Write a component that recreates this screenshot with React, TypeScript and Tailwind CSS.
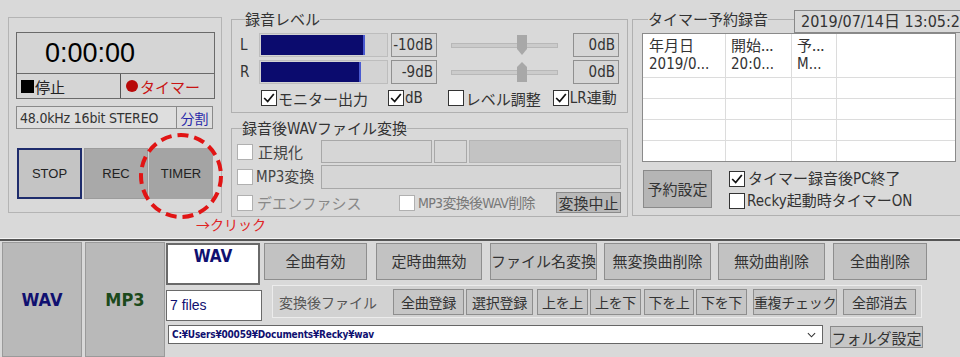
import React from 'react'

const JP = "font-['Noto_Sans_CJK_JP',sans-serif]"
const NARROW = "font-['Liberation_Sans_Narrow','DejaVu_Sans_Condensed','Noto_Sans_CJK_JP',sans-serif]"

function Check({ on, dim }: { on?: boolean; dim?: boolean }) {
  return (
    <span
      className={`flex h-[16px] w-[16px] shrink-0 items-center justify-center bg-white border ${
        dim ? 'border-[#b0b0b0]' : 'border-[#333333]'
      }`}
    >
      {on && (
        <svg viewBox="0 0 16 16" className="h-[14px] w-[14px]">
          <path d="M2.5 8 L6.5 12 L13.5 3.5" fill="none" stroke="#111" strokeWidth="2" />
        </svg>
      )}
    </span>
  )
}

function Meter({ fill }: { fill: number }) {
  return (
    <div className="h-[24px] w-[129px] shrink-0 border border-[#bdbdbd] bg-[#d3d3d3] py-[1px] pl-[1px]">
      <div className="h-full border-r-2 border-[#4a5ad0] bg-[#0b0b6e]" style={{ width: fill }} />
    </div>
  )
}

function Slider({ up }: { up?: boolean }) {
  return (
    <div className="relative flex h-[24px] w-[107px] items-center">
      <div className="h-[5px] w-full border border-[#b8b8b8] bg-[#cbcbcb]" />
      <svg viewBox="0 0 10 20" className="absolute left-[66px] top-[2px] h-[20px] w-[10px]">
        {up ? (
          <path d="M5 0 L10 5 V20 H0 V5 Z" fill="#a8a8a8" />
        ) : (
          <path d="M0 0 H10 V14 L5 20 L0 14 Z" fill="#a8a8a8" />
        )}
      </svg>
    </div>
  )
}

function DbBox({ text }: { text: string }) {
  return (
    <div className={`flex h-[24px] w-[46px] items-center justify-end border border-[#909090] bg-[#d6d6d6] pr-[3px] text-[15px] leading-none text-[#333] ${NARROW}`}>
      {text}
    </div>
  )
}

function TopBtn({ label, w, ml }: { label: string; w: string; ml: string }) {
  return (
    <div
      className={`flex h-[37px] shrink-0 items-center justify-center whitespace-nowrap border border-[#8e8e8e] bg-[#c2c2c2] text-[15px] text-[#333] ${w} ${ml}`}
    >
      {label}
    </div>
  )
}

function SmallBtn({ label, w, ml }: { label: string; w: string; ml: string }) {
  return (
    <div
      className={`flex h-[26px] shrink-0 items-center justify-center whitespace-nowrap border border-[#8e8e8e] bg-[#c6c6c6] text-[14px] leading-none tracking-[-0.3px] text-[#333] ${w} ${ml}`}
    >
      {label}
    </div>
  )
}

export default function App() {
  return (
    <div className={`relative h-[357px] w-[960px] overflow-hidden bg-[#d9d9d9] text-[#222] ${JP}`}>
      {/* top area */}
      <div className="flex h-[239px] border-b border-[#f4f4f4]">
        {/* left: counter + transport */}
        <div className="ml-[8px] mt-[17px] h-[196px] w-[214px] shrink-0 border border-[#b4b4b4] px-[7px] pt-[14px]">
          <div className="flex h-[42px] w-[199px] items-center border border-[#6a6a6a] bg-[#d5d5d5] pl-[28px] font-['Liberation_Sans',sans-serif] text-[27px] font-medium leading-none text-black">
            0:00:00
          </div>
          <div className="flex h-[25px] w-[199px] border-x border-b border-[#6a6a6a] bg-[#d5d5d5] text-[15px] leading-none">
            <div className="flex w-[104px] items-center border-r border-[#555] pl-[4px]">
              <span className="mr-[1px] inline-block h-[13px] w-[13px] bg-black" />
              停止
            </div>
            <div className="flex items-center pl-[5px] text-[#c81414]">
              <span className="mr-[2px] inline-block h-[12px] w-[12px] rounded-full bg-[#b80a0a]" />
              タイマー
            </div>
          </div>
          <div className="mt-[7px] flex h-[23px]">
            <div className={`flex w-[161px] items-center whitespace-nowrap border border-[#8a8a8a] bg-[#dedede] pl-[3px] text-[14px] leading-none tracking-[-0.2px] text-[#333] ${NARROW}`}>
              48.0kHz 16bit STEREO
            </div>
            <div className="flex w-[36px] items-center justify-center border border-l-0 border-[#8a8a8a] bg-[#dedede] text-[14px] leading-none text-[#2828a8]">
              分割
            </div>
          </div>
          <div className="mt-[19px] flex h-[51px] font-['Liberation_Sans',sans-serif] text-[13px] text-[#222]">
            <div className="ml-[1px] flex w-[65px] items-center justify-center border-2 border-[#1e2c6c] bg-[#c4c4c4]">STOP</div>
            <div className="ml-[2px] flex w-[64px] items-center justify-center border border-[#9c9c9c] bg-[#a9a9a9]">REC</div>
            <div className="flex w-[65px] items-center justify-center border-l border-[#d2d2d2] bg-[#a4a4a4]">TIMER</div>
          </div>
        </div>

        {/* middle column */}
        <div className="ml-[9px] flex w-[397px] shrink-0 flex-col">
          <fieldset className="mt-[10px] h-[103px] border border-[#b0b0b0] pl-[8px]">
            <legend className="ml-[5px] text-[15px] leading-[18px] text-[#333]">録音レベル</legend>
            <div className="mt-[5px] flex items-center">
              <span className={`w-[19px] text-[15px] leading-none text-[#333] ${NARROW}`}>L</span>
              <Meter fill={104} />
              <div className="ml-[3px]"><DbBox text="-10dB" /></div>
              <div className="ml-[14px]"><Slider /></div>
              <div className="ml-[15px]"><DbBox text="0dB" /></div>
            </div>
            <div className="mt-[3px] flex items-center">
              <span className={`w-[19px] text-[15px] leading-none text-[#333] ${NARROW}`}>R</span>
              <Meter fill={100} />
              <div className="ml-[3px]"><DbBox text="-9dB" /></div>
              <div className="ml-[14px]"><Slider up /></div>
              <div className="ml-[15px]"><DbBox text="0dB" /></div>
            </div>
            <div className="mt-[4px] flex h-[20px] items-center whitespace-nowrap text-[15px] leading-none text-[#333]">
              <span className="ml-[21px]"><Check on /></span>
              <span className="ml-[1px]">モニター出力</span>
              <span className="ml-[20px]"><Check on /></span>
              <span className={`ml-[1px] ${NARROW}`}>dB</span>
              <span className="ml-[25px]"><Check /></span>
              <span className="ml-[2px]">レベル調整</span>
              <span className="ml-[12px]"><Check on /></span>
              <span className={`ml-[1px] ${NARROW}`}>LR連動</span>
            </div>
          </fieldset>

          <fieldset className="mt-[6px] h-[98px] border border-[#b0b0b0] pl-[5px]">
            <legend className="ml-[5px] text-[15px] leading-[18px] text-[#333]">
              録音後<span className={NARROW}>WAV</span>ファイル変換
            </legend>
            <div className="mt-[2px] flex h-[23px] items-center text-[15px] leading-none">
              <Check dim />
              <span className="ml-[5px] w-[63px] text-[#444]">正規化</span>
              <div className="h-[23px] w-[111px] border border-[#a8a8a8] bg-[#d6d6d6]" />
              <div className="ml-[2px] h-[23px] w-[33px] border border-[#a8a8a8] bg-[#d6d6d6]" />
              <div className="ml-[2px] h-[23px] w-[152px] border border-[#b4b4b4] bg-[#c3c3c3]" />
            </div>
            <div className="mt-[2px] flex h-[24px] items-center text-[15px] leading-none">
              <Check dim />
              <span className={`ml-[3px] w-[65px] text-[#444] ${NARROW}`}>MP3変換</span>
              <div className="h-[24px] w-[300px] border border-[#a8a8a8] bg-[#d6d6d6]" />
            </div>
            <div className="mt-[3px] flex h-[21px] items-center whitespace-nowrap text-[15px] leading-none">
              <Check dim />
              <span className="ml-[4px] w-[142px] text-[#888]">デエンファシス</span>
              <Check dim />
              <span className={`ml-[3px] w-[138px] text-[14px] tracking-[-0.7px] text-[#777] ${NARROW}`}>MP3変換後WAV削除</span>
              <div className="flex h-[21px] w-[65px] items-center justify-center border border-[#8a8a8a] bg-[#b9b9b9] text-[#333]">
                変換中止
              </div>
            </div>
          </fieldset>
        </div>

        {/* right: timer reservation */}
        <fieldset className="relative ml-[4px] mt-[10px] h-[206px] w-[335px] shrink-0 border border-[#b0b0b0] pl-[9px]">
          <legend className="ml-[6px] text-[15px] leading-[18px] text-[#333]">タイマー予約録音</legend>
          <div className={`absolute left-[161px] top-[-18px] flex h-[23px] w-[172px] items-center whitespace-nowrap border border-[#888] bg-[#d9d9d9] pl-[6px] text-[16px] leading-none text-[#333] ${NARROW}`}>
            2019/07/14日 13:05:22
          </div>
          <div className="mt-[5px] h-[129px] w-[314px] border border-[#8a8a8a] bg-white text-[15px] leading-[16px] text-[#333]">
            <div className="flex h-[44px] border-b border-[#dcdcdc]">
              <div className="w-[83px] border-r border-[#dcdcdc] pl-[6px] pt-[3px]">
                <div>年月日</div>
                <div className={`mt-[3px] ${NARROW}`}>2019/0...</div>
              </div>
              <div className="w-[66px] border-r border-[#dcdcdc] pl-[5px] pt-[3px]">
                <div>開始...</div>
                <div className={`mt-[3px] ${NARROW}`}>20:0...</div>
              </div>
              <div className="w-[45px] border-r border-[#dcdcdc] pl-[5px] pt-[3px]">
                <div>予...</div>
                <div className={`mt-[3px] ${NARROW}`}>M...</div>
              </div>
            </div>
            {[0, 1, 2].map((i) => (
              <div key={i} className="flex h-[21px] border-b border-[#dcdcdc]">
                <div className="w-[83px] border-r border-[#dcdcdc]" />
                <div className="w-[66px] border-r border-[#dcdcdc]" />
                <div className="w-[45px] border-r border-[#dcdcdc]" />
              </div>
            ))}
            <div className="flex h-[20px]">
              <div className="w-[83px] border-r border-[#dcdcdc]" />
              <div className="w-[66px] border-r border-[#dcdcdc]" />
              <div className="w-[45px] border-r border-[#dcdcdc]" />
            </div>
          </div>
          <div className="mt-[6px] flex">
            <div className="ml-[1px] mt-[2px] flex h-[38px] w-[69px] items-center justify-center border border-[#8a8a8a] bg-[#b5b5b5] text-[15px] text-[#333]">
              予約設定
            </div>
            <div className="ml-[17px] flex flex-col whitespace-nowrap text-[15px] leading-none text-[#333]">
              <div className="flex h-[21px] items-center">
                <Check on />
                <span className="ml-[3px]">
                  タイマー録音後<span className={NARROW}>PC</span>終了
                </span>
              </div>
              <div className="mt-[1px] flex h-[21px] items-center">
                <Check />
                <span className="ml-[2px]">
                  <span className={NARROW}>Recky</span>起動時タイマー<span className={NARROW}>ON</span>
                </span>
              </div>
            </div>
          </div>
        </fieldset>
      </div>

      {/* bottom area */}
      <div className="flex h-[118px] border-t-2 border-[#555]">
        <div className={`ml-[2px] mt-[1px] flex h-[115px] w-[80px] shrink-0 items-center justify-center border border-[#9a9a9a] bg-[#b9b9b9] text-[18px] font-bold text-[#101070] ${NARROW}`}>
          WAV
        </div>
        <div className={`ml-[3px] mt-[1px] flex h-[115px] w-[80px] shrink-0 items-center justify-center border border-[#9a9a9a] bg-[#b9b9b9] text-[18px] font-bold text-[#1c4a1c] ${NARROW}`}>
          MP3
        </div>
        <div className="ml-[1px] flex shrink-0 flex-col">
          <div className="flex">
            <div className="flex flex-col">
              <div className={`mt-[2px] flex h-[42px] w-[94px] justify-center border-2 border-[#6a6a6a] bg-white pt-[3px] text-[17px] font-bold leading-none text-[#101070] ${NARROW}`}>
                WAV
              </div>
              <div className="mt-[5px] flex h-[31px] w-[96px] items-center border border-[#6a6a6a] bg-white pl-[3px] font-['Liberation_Sans',sans-serif] text-[14px] text-[#101070]">
                7 files
              </div>
            </div>
            <div className="ml-[2px] flex flex-col">
              <div className="mt-[2px] flex">
                <TopBtn label="全曲有効" w="w-[103px]" ml="ml-0" />
                <TopBtn label="定時曲無効" w="w-[106px]" ml="ml-[9px]" />
                <TopBtn label="ファイル名変換" w="w-[107px]" ml="ml-[8px]" />
                <TopBtn label="無変換曲削除" w="w-[107px]" ml="ml-[7px]" />
                <TopBtn label="無効曲削除" w="w-[107px]" ml="ml-[7px]" />
                <TopBtn label="全曲削除" w="w-[94px]" ml="ml-[8px]" />
              </div>
              <div className="ml-[8px] mt-[5px] flex h-[33px] w-[650px] items-center border border-[#ececec] bg-[#d2d2d2] pl-[6px]">
                <span className="w-[97px] shrink-0 whitespace-nowrap text-[14px] leading-none text-[#555]">変換後ファイル</span>
                <SmallBtn label="全曲登録" w="w-[71px]" ml="ml-[17px]" />
                <SmallBtn label="選択登録" w="w-[67px]" ml="ml-[2px]" />
                <SmallBtn label="上を上" w="w-[51px]" ml="ml-[4px]" />
                <SmallBtn label="上を下" w="w-[51px]" ml="ml-[2px]" />
                <SmallBtn label="下を上" w="w-[50px]" ml="ml-[3px]" />
                <SmallBtn label="下を下" w="w-[51px]" ml="ml-[2px]" />
                <SmallBtn label="重複チェック" w="w-[84px]" ml="ml-[6px]" />
                <SmallBtn label="全部消去" w="w-[73px]" ml="ml-[6px]" />
              </div>
            </div>
          </div>
          <div className="mt-[4px] flex">
            <div className="ml-[2px] flex h-[19px] w-[655px] items-center justify-between border border-[#666] bg-white pl-[3px] pr-[6px]">
              <span className={`whitespace-nowrap text-[10px] font-bold leading-none tracking-[-0.2px] text-[#101070] ${NARROW}`}>
                C:¥Users¥00059¥Documents¥Recky¥wav
              </span>
              <svg viewBox="0 0 10 6" className="h-[6px] w-[9px]">
                <path d="M1 1 L5 5 L9 1" fill="none" stroke="#333" strokeWidth="1.2" />
              </svg>
            </div>
            <div className="ml-[7px] mt-[1px] flex h-[22px] w-[93px] items-center justify-center whitespace-nowrap border border-[#8a8a8a] bg-[#c6c6c6] text-[15px] leading-none text-[#333]">
              フォルダ設定
            </div>
          </div>
        </div>
      </div>

      {/* annotation overlay */}
      <svg className="pointer-events-none absolute left-[138px] top-[132px] h-[88px] w-[86px]" viewBox="0 0 86 88">
        <ellipse cx="43" cy="44" rx="40" ry="41" fill="none" stroke="#e11414" strokeWidth="4" strokeDasharray="11 6" />
      </svg>
      <div className="absolute left-[196px] top-[217px] text-[14px] leading-none text-[#e02424]">→クリック</div>
    </div>
  )
}
